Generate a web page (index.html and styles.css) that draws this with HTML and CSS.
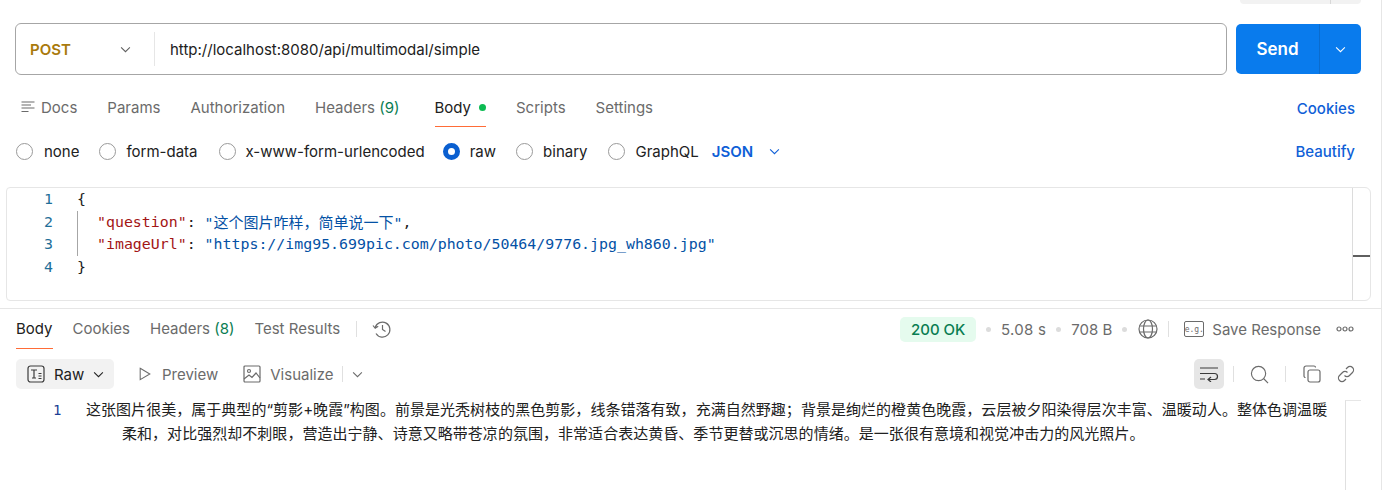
FILE: index.html
```html
<!DOCTYPE html>
<html lang="zh">
<head>
<meta charset="utf-8">
<title>Postman request</title>
<link rel="stylesheet" href="styles.css">
</head>
<body>
<div class="app">
  <div class="top-stub"><span class="stub-split"></span></div>
  <div class="url-row">
    <div class="url-box">
      <div class="method"><span class="method-name">POST</span>
        <svg class="chev-m" viewBox="0 0 12 8"><path d="M1 1.500l5 5 5-5"/></svg></div>
      <div class="url-text">http://localhost:8080/api/multimodal/simple</div>
    </div>
    <div class="send"><span class="send-label">Send</span><span class="send-more"><svg viewBox="0 0 12 8"><path d="M1 1.500l5 5 5-5"/></svg></span></div>
  </div>
  <div class="req-tabs">
    <div class="tab tab-docs"><svg class="docs-icon" viewBox="0 0 14 14"><path d="M0.500 2h13M0.500 5h9.500M0.500 8h13M0.500 11.500h7"/></svg>Docs</div>
    <div class="tab">Params</div>
    <div class="tab">Authorization</div>
    <div class="tab tab-before-body">Headers <span class="count">(9)</span></div>
    <div class="tab tab-active">Body<i class="green-dot"></i></div>
    <div class="tab">Scripts</div>
    <div class="tab">Settings</div>
    <div class="link cookies">Cookies</div>
  </div>
  <div class="body-types">
    <label class="radio radio-first"><i class="circle"></i>none</label>
    <label class="radio"><i class="circle"></i>form-data</label>
    <label class="radio radio-long"><i class="circle"></i>x-www-form-urlencoded</label>
    <label class="radio radio-raw"><i class="circle on"></i>raw</label>
    <label class="radio"><i class="circle"></i>binary</label>
    <label class="radio radio-last"><i class="circle"></i>GraphQL</label>
    <div class="json">JSON<svg viewBox="0 0 12 8"><path d="M1 1.500l5 5 5-5"/></svg></div>
    <div class="link beautify">Beautify</div>
  </div>
  <div class="editor">
    <div class="code">
      <div class="ln-row"><span class="ln">1</span><span class="brace">{</span></div>
      <div class="ln-row"><span class="ln">2</span><span class="guide"></span><span class="key">"question"</span><span class="punct">: </span><span class="str">"<span class="cjk">这个图片咋样，简单说一下</span>"</span><span class="punct">,</span></div>
      <div class="ln-row"><span class="ln">3</span><span class="guide"></span><span class="key">"imageUrl"</span><span class="punct">: </span><span class="str">"https://img95.699pic.com/photo/50464/9776.jpg_wh860.jpg"</span></div>
      <div class="ln-row"><span class="ln">4</span><span class="brace">}</span></div>
    </div>
    <div class="minimap"><i class="marker"></i></div>
  </div>
  <div class="res-tabs">
    <div class="tab tab-active">Body</div>
    <div class="tab">Cookies</div>
    <div class="tab">Headers <span class="count">(8)</span></div>
    <div class="tab tab-last">Test Results</div>
    <i class="vsep"></i>
    <svg class="history" viewBox="0 0 20 20"><path d="M3.200 8.500A7.500 7.500 0 1 1 4 14.500M1 6.500l2.200 2.800 3-2M10.500 6v4.500l3 2"/></svg>
    <div class="status">
      <span class="ok">200 OK</span><i class="dot"></i><span class="time">5.08 s</span><i class="dot"></i><span>708 B</span><i class="dot dot-last"></i>
      <svg class="globe" viewBox="0 0 20 20"><circle cx="10" cy="10" r="9"/><ellipse cx="10" cy="10" rx="4.500" ry="9"/><path d="M1.500 7h17M1.500 13h17"/></svg>
      <i class="vsep"></i>
      <span class="save"><span class="eg">e.g.</span>Save Response</span>
      <svg class="more" viewBox="0 0 18 6"><circle cx="3" cy="3" r="2"/><circle cx="9" cy="3" r="2"/><circle cx="15" cy="3" r="2"/></svg>
    </div>
  </div>
  <div class="res-tools">
    <div class="raw-btn">
      <svg class="raw-icon" viewBox="0 0 18 18"><rect x="1" y="1" width="16" height="16" rx="2.500"/><path d="M4 5h6M7 5v8M5 13h4M11.500 8.500h3M11.500 11h3M11.500 13.500h3"/></svg>
      <span class="raw-label">Raw</span>
      <svg class="chev-s" viewBox="0 0 12 8"><path d="M1 1.500l5 5 5-5"/></svg>
    </div>
    <div class="view view-preview"><svg viewBox="0 0 16 16"><path d="M2.500 1.500l11 6.500-11 6.500z"/></svg>Preview</div>
    <div class="view view-vis"><svg viewBox="0 0 18 18"><rect x="1" y="1" width="16" height="16" rx="1"/><circle cx="6" cy="6" r="1.500"/><path d="M1 14l5-4 3 2.500 4-4.500 4 5"/></svg>Visualize</div>
    <i class="vsep vsep-view"></i>
    <svg class="chev-g" viewBox="0 0 12 8"><path d="M1 1.500l5 5 5-5"/></svg>
    <div class="tools-right">
      <span class="wrap-btn"><svg viewBox="0 0 20 16"><path d="M1 2h18M1 13h5M1 7.500h14.500a3 3 0 0 1 0 6h-6M12 11l-3 2.500 3 2.500"/></svg></span>
      <i class="vsep sep-a"></i>
      <svg class="search" viewBox="0 0 20 20"><circle cx="9" cy="9" r="7.500"/><path d="M14.500 14.500l4.500 4.500"/></svg>
      <i class="vsep sep-b"></i>
      <svg class="copy" viewBox="0 0 18 18"><rect x="5" y="5" width="12" height="12" rx="2"/><path d="M2.500 12.500A1.500 1.500 0 0 1 1 11V3a2 2 0 0 1 2-2h8a1.500 1.500 0 0 1 1.500 1.500"/></svg>
      <svg class="chain" viewBox="0 0 18 18"><path d="M7.500 10.500a3.500 3.500 0 0 0 5 0l3-3a3.500 3.500 0 0 0-5-5L9 4M10.500 7.500a3.500 3.500 0 0 0-5 0l-3 3a3.500 3.500 0 0 0 5 5L9 14"/></svg>
    </div>
  </div>
  <div class="response">
    <span class="res-ln">1</span>
    <p class="res-text">这张图片很美，属于典型的“剪影+晚霞”构图。前景是光秃树枝的黑色剪影，线条错落有致，充满自然野趣；背景是绚烂的橙黄色晚霞，云层被夕阳染得层次丰富、温暖动人。整体色调温暖柔和，对比强烈却不刺眼，营造出宁静、诗意又略带苍凉的氛围，非常适合表达黄昏、季节更替或沉思的情绪。是一张很有意境和视觉冲击力的风光照片。</p>
    <div class="res-mini"></div>
  </div>
</div>
</body>
</html>
```
FILE: styles.css
```css
* { box-sizing: border-box; }
html, body { margin: 0; padding: 0; background: #fff; overflow: hidden; }
body { width: 1384px; height: 490px; font-family: Inter, "Noto Sans CJK SC", sans-serif; font-size: 15px; color: #6b6b6b; }
i { display: block; font-style: normal; }
svg { display: block; fill: none; stroke: currentColor; stroke-width: 1.2; flex: none; }
.app { width: 1382px; height: 490px; border-right: 1px solid #e6e6e6; position: relative; }

.top-stub { position: absolute; left: 1240px; top: 0; width: 121px; height: 4px; background: #f2f2f2; border-radius: 0 0 5px 5px; }
.stub-split { position: absolute; left: 90px; top: 0; width: 1px; height: 4px; background: #d8d8d8; }

.url-row { display: flex; padding: 23px 0 0 15px; height: 75px; align-items: flex-start; }
.url-box { width: 1212px; height: 52px; border: 1px solid #a6a6a6; border-radius: 6px; display: flex; align-items: center; }
.method { width: 139px; height: 34px; border-right: 1px solid #e6e6e6; display: flex; align-items: center; padding: 0 23px 0 14px; color: #a97a0c; font-weight: 600; justify-content: space-between; }
.chev-m { width: 11px; height: 7px; color: #5f5f5f; }
.url-text { padding-left: 15px; color: #212121; }
.send { margin: 1px 0 0 9px; width: 125px; height: 50px; background: #097bed; border-radius: 5px; color: #fff; display: flex; align-items: center; }
.send-label { width: 84px; border-right: 1px solid #0a6ccf; height: 50px; display: flex; align-items: center; justify-content: center; font-weight: 600; font-size: 17px; }
.send-more { flex: 1; display: flex; justify-content: center; }
.send-more svg { width: 11px; height: 7px; }

.req-tabs { display: flex; align-items: flex-end; height: 52px; padding: 0 26px 0 21px; }
.tab { height: 38px; padding-bottom: 2px; display: flex; align-items: center; position: relative; margin-right: 30px; color: #6b6b6b; white-space: pre; }
.tab-before-body { margin-right: 35px; }
.docs-icon { width: 14px; height: 14px; margin-right: 6px; }
.count { color: #0a7d52; }
.tab-active { color: #212121; }
.tab-active::after { content: ""; position: absolute; left: 0; right: 0; bottom: 0; height: 1px; background: #ff6c37; }
.green-dot { width: 7px; height: 7px; border-radius: 50%; background: #0cbb52; margin-left: 8px; }
.link { margin-left: auto; color: #0f5fd7; font-weight: 500; }
.cookies { height: 38px; display: flex; align-items: center; padding-top: 1px; }

.body-types { display: flex; align-items: center; height: 45px; padding: 4px 26px 0 16px; }
.radio { display: flex; align-items: center; color: #212121; margin-right: 21px; }
.radio-first { margin-right: 20px; }
.radio-first .circle { margin-right: 11px; }
.radio-long { margin-right: 18px; }
.radio-raw { margin-right: 20px; }
.radio-last { margin-right: 13px; }
.circle { width: 17px; height: 17px; border-radius: 50%; border: 1px solid #9a9a9a; margin-right: 10px; }
.circle.on { border: 5.500px solid #0a5fd0; }
.json { display: flex; align-items: center; color: #0f5fd7; font-weight: 600; white-space: pre; }
.json svg { width: 11px; height: 7px; margin-left: 16px; }

.editor { margin: 15px 0 0 6px; width: 1365px; height: 114px; border: 1px solid #e6e6e6; border-radius: 4px 6px 6px 4px; display: flex; position: relative; }
.code { flex: 1; font-family: "DejaVu Sans Mono", "Noto Sans CJK SC", monospace; font-size: 14.9px; color: #212121; }
.ln-row { height: 22.5px; display: flex; align-items: center; position: relative; white-space: pre; }
.ln { width: 70px; padding-left: 37px; color: #1f6f99; }
.brace { color: #212121; }
.guide { position: absolute; left: 70px; top: 0; width: 1px; height: 22.5px; background: #a6a6a6; }
.ln-row .key { margin-left: 20px; color: #a31515; }
.punct { color: #212121; }
.str { color: #0451a5; }
.cjk { font-size: 15px; }
.minimap { width: 18px; border-left: 1px solid #dcdcdc; position: relative; }
.marker { position: absolute; left: 0; right: 0; top: 67px; height: 2px; background: #5f5f5f; }

.res-tabs { margin-top: 7px; border-top: 1px solid #e6e6e6; height: 41px; display: flex; align-items: center; padding: 0 27px 0 16px; position: relative; }
.res-tabs .tab { margin-right: 20px; height: 40px; }
.res-tabs .tab-last { margin-right: 16px; }
.vsep { width: 1px; height: 16px; background: #e0e0e0; flex: none; }
.history { width: 20px; height: 20px; margin-left: 15px; color: #6b6b6b; }
.status { margin-left: auto; display: flex; align-items: center; gap: 10px; color: #6b6b6b; }
.ok { background: #e5fbee; color: #0a7d52; border-radius: 5px; height: 25px; padding: 0 10.5px; display: flex; align-items: center; font-weight: 500; }
.time { letter-spacing: 0.3px; }
.dot { width: 5px; height: 5px; border-radius: 50%; background: #dcdcdc; }
.dot-last { margin-right: 1px; }
.globe { width: 20px; height: 20px; }
.save { display: flex; align-items: center; margin-left: 5px; }
.eg { width: 20px; height: 16px; border: 1px solid #6b6b6b; border-radius: 2px; font-size: 8px; font-family: "DejaVu Sans Mono", monospace; display: flex; align-items: center; justify-content: center; margin-right: 8px; }
.more { width: 18px; height: 6px; margin-left: 5px; }

.res-tools { display: flex; align-items: center; height: 30px; margin-top: 10px; padding: 0 26px 0 16px; }
.raw-btn { width: 98px; height: 30px; background: #f2f2f2; border-radius: 5px; display: flex; align-items: center; padding-left: 11px; color: #212121; }
.raw-icon { width: 18px; height: 18px; color: #3b3b3b; margin-right: 9px; }
.chev-s { width: 11px; height: 7px; margin-left: 9px; }
.view { display: flex; align-items: center; color: #6b6b6b; }
.view-preview { margin-left: 24px; }
.view-preview svg { width: 14px; height: 14px; margin-right: 10px; }
.view-vis { margin-left: 25px; }
.view-vis svg { width: 18px; height: 18px; margin-right: 9px; }
.vsep-view { margin-left: 8px; }
.chev-g { width: 11px; height: 7px; margin-left: 9px; color: #6b6b6b; }
.tools-right { margin-left: auto; display: flex; align-items: center; }
.wrap-btn { width: 30px; height: 30px; background: #e6e6e6; border-radius: 5px; display: flex; align-items: center; justify-content: center; color: #3b3b3b; }
.wrap-btn svg { width: 20px; height: 16px; }
.sep-a { margin: 0 16px 0 9px; }
.sep-b { margin: 0 17px 0 16px; }
.search { width: 19px; height: 19px; }
.copy { width: 18px; height: 18px; }
.chain { width: 18px; height: 18px; margin-left: 16px; }

.response { display: flex; margin-top: 9px; position: relative; height: 92px; }
.res-ln { width: 86px; padding: 4px 0 0 53px; font-family: "DejaVu Sans Mono", monospace; font-size: 14px; color: #1c3f94; flex: none; }
.res-text { margin: 0; width: 1246px; padding-left: 36px; text-indent: -36px; font-size: 15px; line-height: 24px; letter-spacing: 0.036px; color: #212121; }
.res-mini { position: absolute; left: 1345px; top: 2px; width: 16px; height: 90px; border-left: 1px solid #e0e0e0; border-top: 1px solid #e6e6e6; }
```
